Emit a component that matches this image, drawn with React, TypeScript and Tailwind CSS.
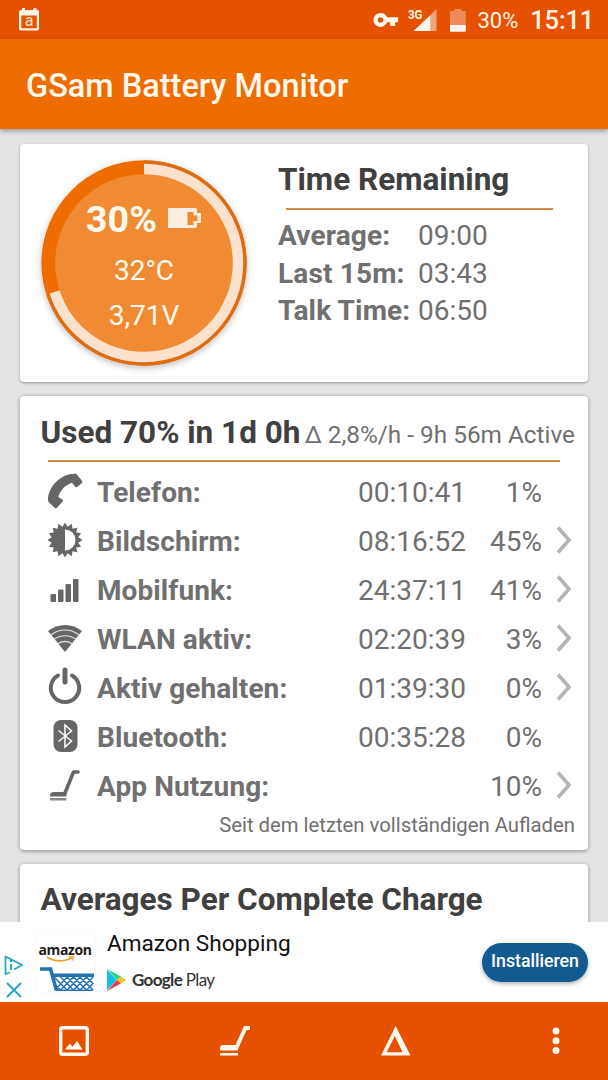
import React from "react";

const StatusBar = () => {
  return (
    <div className="h-[39px] shrink-0 bg-[#e65100] flex items-center justify-between pl-[19px] pr-[14px]">
      <svg width="21" height="23" viewBox="0 0 21 23" fill="none">
        <path d="M3 0h3v2h8.500V0h3v2a2 2 0 0 1 2.500 2v16.500a2 2 0 0 1-2 2H2a2 2 0 0 1-2-2V4a2 2 0 0 1 2-2h1zM2.300 7.500v12.700h15.500V7.500z" fill="#fff3e8" fillRule="evenodd" />
        <text x="10" y="18" fontFamily="Roboto, sans-serif" fontSize="16" textAnchor="middle" fill="#ffe3cf">a</text>
      </svg>
      <div className="flex items-center text-[#fff3e8]">
        <svg className="mt-px" width="26" height="16" viewBox="0 0 26 16">
          <path d="M7.500 1a7 7 0 1 0 6.600 9.200h3V14h5v-3.800H25V5.300H14.100A7 7 0 0 0 7.500 1zm0 4.200a2.700 2.700 0 1 1 0 5.400 2.700 2.700 0 0 1 0-5.400z" fill="#fff8f0" fillRule="evenodd" />
        </svg>
        <svg className="ml-[9px]" width="30" height="24" viewBox="0 0 30 24">
          <path d="M22.500 7V23h6V1z" fill="#f4a47c" />
          <path d="M5.500 23l17-16v16z" fill="#fff8f0" />
          <text x="0" y="11" fontFamily="Roboto, sans-serif" fontSize="13" fontWeight="700" textLength="14.500" lengthAdjust="spacingAndGlyphs" fill="#fff3e8">3G</text>
        </svg>
        <svg className="ml-[12px]" width="16" height="24" viewBox="0 0 16 24">
          <path d="M4.500 1h7v2H15a.8.8 0 0 1 .8.800V17H0V3.800A.8.8 0 0 1 .8 3h3.700z" fill="#f08a5a" />
          <path d="M0 17h15.800v6a.8.8 0 0 1-.8.800H.8A.8.8 0 0 1 0 23z" fill="#fff8f0" />
        </svg>
        <span className="ml-[11px] mt-[2px] text-[22px] leading-none">30%</span>
        <span className="ml-[12px] mt-[2px] text-[25.500px] leading-none font-medium tracking-[-0.200px]">15:11</span>
      </div>
    </div>
  );
};

const BatteryGauge = () => {
  return (
    <div className="relative w-[206px] h-[206px] rounded-full shadow-[0_2px_6px_rgba(0,0,0,0.25)]">
      <svg className="absolute inset-0" width="206" height="206" viewBox="0 0 206 206">
        <circle cx="103" cy="103" r="102.700" fill="#ef6c00" />
        <circle cx="103" cy="103" r="101" fill="none" stroke="#dd6d15" strokeWidth="3.400" pathLength="100" strokeDasharray="70 30" transform="rotate(-90 103 103)" />
        <circle cx="103" cy="103" r="88.800" fill="#f18b33" />
        <circle cx="103" cy="103" r="94" fill="none" stroke="#fce2cc" strokeWidth="10.500" pathLength="100" strokeDasharray="70 30" transform="rotate(-90 103 103)" />
      </svg>
      <div className="relative flex flex-col items-center text-[#fffaf0]">
        <div className="mt-[36px] h-[48px] flex items-center">
          <span className="text-[37.500px] font-bold leading-none">30%</span>
          <svg className="ml-[11px] -mt-[4px] mr-px" width="33" height="20" viewBox="0 0 33 20">
            <path d="M1 0h26.500a1.500 1.500 0 0 1 1.500 1.500V5h4v10h-4v3.500a1.500 1.500 0 0 1-1.500 1.500H1a1 1 0 0 1-1-1V1a1 1 0 0 1 1-1zM19.500 4v13h6v-4h4V7.500h-4V4z" fill="#fceee0" fillRule="evenodd" />
          </svg>
        </div>
        <span className="mt-[4px] h-[45px] text-[28px] leading-[45px]">32°C</span>
        <span className="h-[45px] text-[28px] leading-[45px]">3,71V</span>
      </div>
    </div>
  );
};

const PhoneIcon = () => (
  <svg width="36" height="36" viewBox="0 0 36 36">
    <path d="M27.500.8c.8-.4 1.700-.1 2.300.6L35 7.800c.6.700.5 1.600-.1 2.200l-4.700 4c-.7.600-1.500.4-2-.2L25 9.800C18.500 12 13.500 17 11.300 24l4 2.500c.7.500.8 1.300.3 2L10 34.700c-.6.700-1.400.7-2 .2l-5.500-5C1 28.500.7 27 1 25 2.500 12.500 14 1 27.500.8z" fill="#666" />
  </svg>
);

const BrightnessIcon = () => {
  // 16 rays around the disc
  const points = Array.from({ length: 32 }, (_, i) => {
    const r = i % 2 ? 13.5 : 17.5;
    const a = (i * Math.PI) / 16;
    return `${18 + r * Math.sin(a)},${18 - r * Math.cos(a)}`;
  }).join(" ");
  return (
    <svg width="36" height="36" viewBox="0 0 36 36">
      <polygon points={points} fill="#666" />
      <path d="M18 7.500a10.500 10.500 0 0 1 0 21z" fill="#fff" />
    </svg>
  );
};

const SignalIcon = () => (
  <svg className="mt-[3px]" width="36" height="36" viewBox="0 0 36 36" fill="#666">
    <rect x="3.500" y="22" width="5.500" height="8" rx="1" />
    <rect x="11" y="17.500" width="5.500" height="12.500" rx="1" />
    <rect x="18.500" y="12" width="5.500" height="18" rx="1" />
    <rect x="26" y="7" width="5.500" height="23" rx="1" />
  </svg>
);

const WifiIcon = () => (
  <svg width="36" height="36" viewBox="0 0 36 36">
    <path d="M18 32 1 11C11 3 25 3 35 11z" fill="#666" />
    <path d="M3.500 15.300c9-7 20-7 29 0M6.800 19.500c6.500-5 16-5 22.500 0M10.500 24c4.500-3.500 10.500-3.500 15 0" fill="none" stroke="#e6e6e6" strokeWidth="1.100" />
  </svg>
);

const PowerIcon = () => (
  <svg className="-mt-px" width="36" height="38" viewBox="0 0 36 38" fill="none" stroke="#666" strokeLinecap="round">
    <path d="M11 8.500a14.200 14.200 0 1 0 14 0" strokeWidth="4" />
    <path d="M18 3v12" strokeWidth="5" />
  </svg>
);

const BluetoothIcon = () => (
  <svg width="36" height="36" viewBox="0 0 36 36">
    <rect x="6.500" y="2" width="24" height="32" rx="7.500" fill="#666" />
    <path d="m11.500 12.500 13 10.500-6.500 6V7l6.500 6-13 10.500" fill="none" stroke="#fff" strokeWidth="1.500" />
  </svg>
);

const BroomIcon = () => (
  <svg width="36" height="36" viewBox="0 0 36 36">
    <path d="M18 26 26.500 5h4.500" fill="none" stroke="#666" strokeWidth="3.600" strokeLinecap="round" strokeLinejoin="round" />
    <path d="M7 25h12.500v4.500H3V28.500C3 26.500 4.500 25 7 25z" fill="#666" />
    <path d="M3 31h16.500v2.500H3z" fill="#8a8a8a" />
  </svg>
);

const usage = [
  { icon: <PhoneIcon />, label: "Telefon:", time: "00:10:41", percent: "1%", more: false },
  { icon: <BrightnessIcon />, label: "Bildschirm:", time: "08:16:52", percent: "45%", more: true },
  { icon: <SignalIcon />, label: "Mobilfunk:", time: "24:37:11", percent: "41%", more: true },
  { icon: <WifiIcon />, label: "WLAN aktiv:", time: "02:20:39", percent: "3%", more: true },
  { icon: <PowerIcon />, label: "Aktiv gehalten:", time: "01:39:30", percent: "0%", more: true },
  { icon: <BluetoothIcon />, label: "Bluetooth:", time: "00:35:28", percent: "0%", more: false },
  { icon: <BroomIcon />, label: "App Nutzung:", time: "", percent: "10%", more: true },
];

const remaining = [
  { label: "Average:", value: "09:00" },
  { label: "Last 15m:", value: "03:43" },
  { label: "Talk Time:", value: "06:50" },
];

const AdBanner = () => {
  return (
    <div className="h-[80px] shrink-0 bg-white flex items-center">
      <div className="w-[36px] flex flex-col pl-[4px] pt-[30px] gap-[7px] self-start">
        <svg width="20" height="20" viewBox="0 0 20 20" className="mt-[3px]" fill="none" stroke="#24a5c4" strokeWidth="1.800">
          <path d="M6 17.500 1.500 19V1.500L18 10 10 14.500" strokeLinejoin="round" />
          <path d="M7 9v6M7 5v2" strokeWidth="2" />
        </svg>
        <svg width="20" height="16" viewBox="0 0 20 16" fill="none" stroke="#24a5c4" strokeWidth="1.900">
          <path d="m3 1 14 14M17 1 3 15" />
        </svg>
      </div>
      <div className="w-[59px] h-[60px] pt-[9px] shadow-[0_0_1px_rgba(0,0,0,0.12)]">
        <p className="h-[15px] w-[58px] text-center font-['Open_Sans',sans-serif] text-[14px] leading-[18px] font-bold tracking-[-0.400px] text-[#1b1b1b]">amazon</p>
        <svg width="59" height="36" viewBox="0 24 59 36" fill="none">
          <path d="M11 25c8 5 18 5 25 .5" stroke="#f6a02d" strokeWidth="1.800" />
          <path d="m33 25 4.500-.5-1 4" stroke="#f6a02d" strokeWidth="1.300" />
          <path d="M4 37h10.500l6 21.500" stroke="#2372b2" strokeWidth="3.600" />
          <path d="M16 41.500h42V45H17zM20 57.500h37V59H20z" fill="#2372b2" />
          <path d="m18 45 13 13 13-13 13 13M57 45 44 58 31 45 19.500 57.500M24.500 45l13 13 13-13 7 7M50.500 58l-13-13-13 13-5-5M50.500 58l7-7" stroke="#2372b2" strokeWidth="1.500" />
        </svg>
      </div>
      <div className="ml-[12px] -mt-[2px] flex flex-col">
        <span className="text-[22.600px] leading-[26px] text-[#111]">Amazon Shopping</span>
        <div className="mt-[12px] h-[22px] flex items-center whitespace-nowrap">
          <svg width="19" height="22" viewBox="0 0 19 22">
            <path d="M0 1v20l10-10z" fill="#12bfe5" />
            <path d="M0 0 14 7.500 10.200 11z" fill="#27d37e" />
            <path d="m0 22 14-7.500-3.800-3.700z" fill="#f0384b" />
            <path d="m14 7.500 5 3.500-5 3.500-4-3.500z" fill="#fbc51b" />
          </svg>
          <p className="ml-[6px] font-[Lato,sans-serif] text-[17px] leading-[22px] tracking-[-0.650px] text-[#333]">
            <span className="font-bold">Google</span> Play
          </p>
        </div>
      </div>
      <button className="ml-auto mr-[20px] w-[106px] h-[39px] pb-px rounded-full bg-[#125b91] text-white text-[17.700px] font-medium shadow-[0_2px_4px_rgba(0,0,0,0.3)]">
        Installieren
      </button>
    </div>
  );
};

const BottomBar = () => {
  return (
    <div className="h-[78px] shrink-0 bg-[#e65100] flex items-center pl-[59px]">
      <svg width="30" height="30" viewBox="0 0 30 30">
        <rect x="1.700" y="1.700" width="26.600" height="26.600" rx="2" fill="none" stroke="#fff8f0" strokeWidth="3.400" />
        <path d="m6 23.500 4.800-6 2.700 3.200 4.500-5.700 5.500 8.500z" fill="#fff8f0" />
      </svg>
      <svg className="ml-[131px]" width="30" height="30" viewBox="0 0 30 30" fill="#fff8f0">
        <path d="M24 0h6v4h-3.500L18 23v1.500H0V22c0-2 1-3 3-3h12.500zM0 27h18v2.500H0z" />
      </svg>
      <svg className="ml-[131px]" width="30" height="30" viewBox="0 0 30 30">
        <path d="M14.700 0 29.500 29.500H0zM13.800 10 5.700 26.200H21.500z" fill="#fff8f0" fillRule="evenodd" />
      </svg>
      <svg className="ml-[140px]" width="10" height="28" viewBox="0 0 10 28" fill="#fff8f0">
        <circle cx="5" cy="4" r="3.500" />
        <circle cx="5" cy="13.800" r="3.500" />
        <circle cx="5" cy="23.600" r="3.500" />
      </svg>
    </div>
  );
};

const App = () => {
  return (
    <div className="w-[608px] h-[1080px] flex flex-col overflow-hidden bg-[#e4e4e4] font-[Roboto,sans-serif] text-[#707070]">
      <StatusBar />
      <div className="relative h-[90px] shrink-0 bg-[#ef6c00] flex items-center pl-[26px] pt-[5px] shadow-[0_2px_5px_rgba(0,0,0,0.35)]">
        <h1 className="text-[32.500px] font-medium text-[#fff8ee] whitespace-nowrap">GSam Battery Monitor</h1>
      </div>

      <div className="flex-1 min-h-0 overflow-hidden flex flex-col gap-[14px] px-[20px] pt-[15px]">
        <div className="h-[238px] shrink-0 rounded-[4px] bg-white flex pl-[21px] pt-[16px] shadow-[0_1px_3px_rgba(0,0,0,0.35)]">
          <BatteryGauge />
          <div className="ml-[31px]">
            <h2 className="h-[40px] text-[31.500px] leading-[40px] font-bold text-[#404040] whitespace-nowrap">Time Remaining</h2>
            <div className="mt-[8px] ml-[8px] w-[267px] h-[2px] bg-[#cf8a46]" />
            <div className="mt-[7px]">
              {remaining.map((r) => (
                <div key={r.label} className="h-[37.700px] flex items-center text-[28px] whitespace-nowrap">
                  <span className="w-[140px] font-bold tracking-[0.150px]">{r.label}</span>
                  <span>{r.value}</span>
                </div>
              ))}
            </div>
          </div>
        </div>

        <div className="h-[454px] shrink-0 rounded-[4px] bg-white pt-[16px] shadow-[0_1px_4px_rgba(0,0,0,0.4)]">
          <div className="h-[40px] pt-px pl-[20.500px] pr-[13px] flex items-start justify-between whitespace-nowrap">
            <h2 className="text-[31.500px] leading-[40px] font-bold text-[#404040]">Used 70% in 1d 0h</h2>
            <span className="mt-px text-[24.350px] leading-[42px]">Δ 2,8%/h - 9h 56m Active</span>
          </div>
          <div className="mt-[8px] ml-[28px] w-[512px] h-[2px] bg-[#cf8a46]" />
          <div className="mt-[6px]">
            {usage.map((u) => (
              <div key={u.label} className="h-[49px] flex items-center pl-[27px] text-[28px] whitespace-nowrap">
                <div className="w-[50px] -mt-[4px]">{u.icon}</div>
                <span className="w-[261px] font-bold tracking-[0.080px]">{u.label}</span>
                <span className="w-[108px]">{u.time}</span>
                <span className="w-[76px] text-right">{u.percent}</span>
                {u.more && (
                  <svg className="ml-[13px] -mt-[3px]" width="18" height="30" viewBox="0 0 18 30">
                    <path d="m3 2.500 11 12.500L3 27.500" fill="none" stroke="#b4b4b4" strokeWidth="3.600" />
                  </svg>
                )}
              </div>
            ))}
          </div>
          <p className="pr-[13px] text-right text-[20.300px] leading-[28px]">Seit dem letzten vollständigen Aufladen</p>
        </div>

        <div className="h-[120px] shrink-0 rounded-[4px] bg-white pl-[20.500px] pt-[16px] shadow-[0_1px_4px_rgba(0,0,0,0.4)]">
          <h2 className="text-[31.500px] leading-[40px] font-bold text-[#404040] whitespace-nowrap">Averages Per Complete Charge</h2>
        </div>
      </div>

      <AdBanner />
      <BottomBar />
    </div>
  );
};

export default App;
